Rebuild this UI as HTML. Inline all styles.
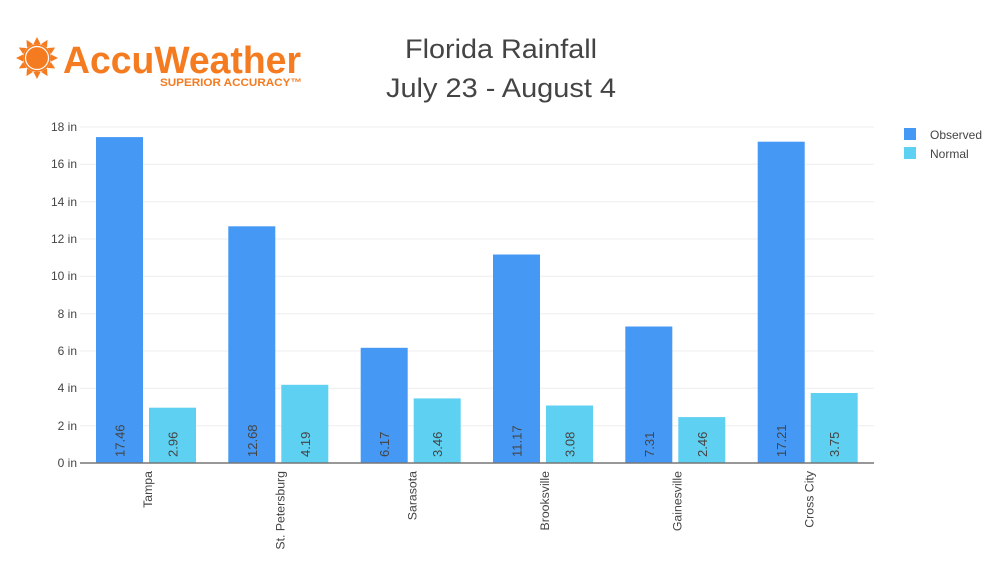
<!DOCTYPE html>
<html><head><meta charset="utf-8"><style>
html,body{margin:0;padding:0;background:#fff;}
svg{display:block;font-family:"Liberation Sans",sans-serif;}
</style></head><body>
<svg width="1002" height="562" viewBox="0 0 1002 562">
<!-- logo -->
<g fill="#f47b20">
  <g transform="translate(37,58)">
    <circle r="14" fill="#f47b20"/>
    <circle r="11.5" fill="none" stroke="#fff" stroke-width="1.2"/>
    <g>
      <polygon points="-3.5,-14 3.5,-14 0,-21"/>
      <polygon points="-3.5,-14 3.5,-14 0,-21" transform="rotate(30)"/>
      <polygon points="-3.5,-14 3.5,-14 0,-21" transform="rotate(60)"/>
      <polygon points="-3.5,-14 3.5,-14 0,-21" transform="rotate(90)"/>
      <polygon points="-3.5,-14 3.5,-14 0,-21" transform="rotate(120)"/>
      <polygon points="-3.5,-14 3.5,-14 0,-21" transform="rotate(150)"/>
      <polygon points="-3.5,-14 3.5,-14 0,-21" transform="rotate(180)"/>
      <polygon points="-3.5,-14 3.5,-14 0,-21" transform="rotate(210)"/>
      <polygon points="-3.5,-14 3.5,-14 0,-21" transform="rotate(240)"/>
      <polygon points="-3.5,-14 3.5,-14 0,-21" transform="rotate(270)"/>
      <polygon points="-3.5,-14 3.5,-14 0,-21" transform="rotate(300)"/>
      <polygon points="-3.5,-14 3.5,-14 0,-21" transform="rotate(330)"/>
    </g>
  </g>
  <text x="63" y="73" font-size="38" font-weight="bold" textLength="238" lengthAdjust="spacingAndGlyphs">AccuWeather</text>
  <text x="160" y="86" font-size="11" font-weight="bold" textLength="142" lengthAdjust="spacingAndGlyphs">SUPERIOR ACCURACY™</text>
</g>
<!-- title -->
<text x="501" y="58" font-size="27" fill="#444" text-anchor="middle" textLength="192" lengthAdjust="spacingAndGlyphs">Florida Rainfall</text>
<text x="501" y="97" font-size="27" fill="#444" text-anchor="middle" textLength="230" lengthAdjust="spacingAndGlyphs">July 23 - August 4</text>
<!-- grid -->
<g stroke="#eee" stroke-width="1">
  <line x1="80" x2="874" y1="425.7" y2="425.7"/>
  <line x1="80" x2="874" y1="388.3" y2="388.3"/>
  <line x1="80" x2="874" y1="351" y2="351"/>
  <line x1="80" x2="874" y1="313.7" y2="313.7"/>
  <line x1="80" x2="874" y1="276.3" y2="276.3"/>
  <line x1="80" x2="874" y1="239" y2="239"/>
  <line x1="80" x2="874" y1="201.7" y2="201.7"/>
  <line x1="80" x2="874" y1="164.3" y2="164.3"/>
  <line x1="80" x2="874" y1="127" y2="127"/>
</g>
<g font-size="12" fill="#444" text-anchor="end">
  <text x="77" y="467">0 in</text>
  <text x="77" y="430">2 in</text>
  <text x="77" y="392">4 in</text>
  <text x="77" y="355">6 in</text>
  <text x="77" y="318">8 in</text>
  <text x="77" y="280">10 in</text>
  <text x="77" y="243">12 in</text>
  <text x="77" y="206">14 in</text>
  <text x="77" y="168">16 in</text>
  <text x="77" y="131">18 in</text>
</g>
<!-- bars -->
<g fill="#4599f5">
  <rect x="96" y="137.1" width="47" height="325.9"/>
  <rect x="228.3" y="226.3" width="47" height="236.7"/>
  <rect x="360.7" y="347.8" width="47" height="115.2"/>
  <rect x="493" y="254.5" width="47" height="208.5"/>
  <rect x="625.3" y="326.5" width="47" height="136.5"/>
  <rect x="757.7" y="141.7" width="47" height="321.3"/>
</g>
<g fill="#5ed0f1">
  <rect x="149" y="407.7" width="47" height="55.3"/>
  <rect x="281.3" y="384.8" width="47" height="78.2"/>
  <rect x="413.7" y="398.4" width="47" height="64.6"/>
  <rect x="546" y="405.5" width="47" height="57.5"/>
  <rect x="678.3" y="417.1" width="47" height="45.9"/>
  <rect x="810.7" y="393" width="47" height="70"/>
</g>
<line x1="80" x2="874" y1="463" y2="463" stroke="#777" stroke-width="1.5"/>
<!-- value labels -->
<g font-size="13" fill="#444">
  <text transform="translate(124.5,457) rotate(-90)">17.46</text>
  <text transform="translate(177.5,457) rotate(-90)">2.96</text>
  <text transform="translate(256.8,457) rotate(-90)">12.68</text>
  <text transform="translate(309.8,457) rotate(-90)">4.19</text>
  <text transform="translate(389.2,457) rotate(-90)">6.17</text>
  <text transform="translate(442.2,457) rotate(-90)">3.46</text>
  <text transform="translate(521.5,457) rotate(-90)">11.17</text>
  <text transform="translate(574.5,457) rotate(-90)">3.08</text>
  <text transform="translate(653.8,457) rotate(-90)">7.31</text>
  <text transform="translate(706.8,457) rotate(-90)">2.46</text>
  <text transform="translate(786.2,457) rotate(-90)">17.21</text>
  <text transform="translate(839.2,457) rotate(-90)">3.75</text>
</g>
<!-- categories -->
<g font-size="12.3" fill="#444" text-anchor="end">
  <text transform="translate(152,471) rotate(-90)">Tampa</text>
  <text transform="translate(284.3,471) rotate(-90)">St. Petersburg</text>
  <text transform="translate(416.7,471) rotate(-90)">Sarasota</text>
  <text transform="translate(549,471) rotate(-90)">Brooksville</text>
  <text transform="translate(681.3,471) rotate(-90)">Gainesville</text>
  <text transform="translate(813.7,471) rotate(-90)">Cross City</text>
</g>
<!-- legend -->
<rect x="904" y="128" width="12" height="12" fill="#4599f5"/>
<rect x="904" y="147" width="12" height="12" fill="#5ed0f1"/>
<g font-size="12" fill="#444">
  <text x="930" y="139">Observed</text>
  <text x="930" y="158">Normal</text>
</g>
</svg>
</body></html>
